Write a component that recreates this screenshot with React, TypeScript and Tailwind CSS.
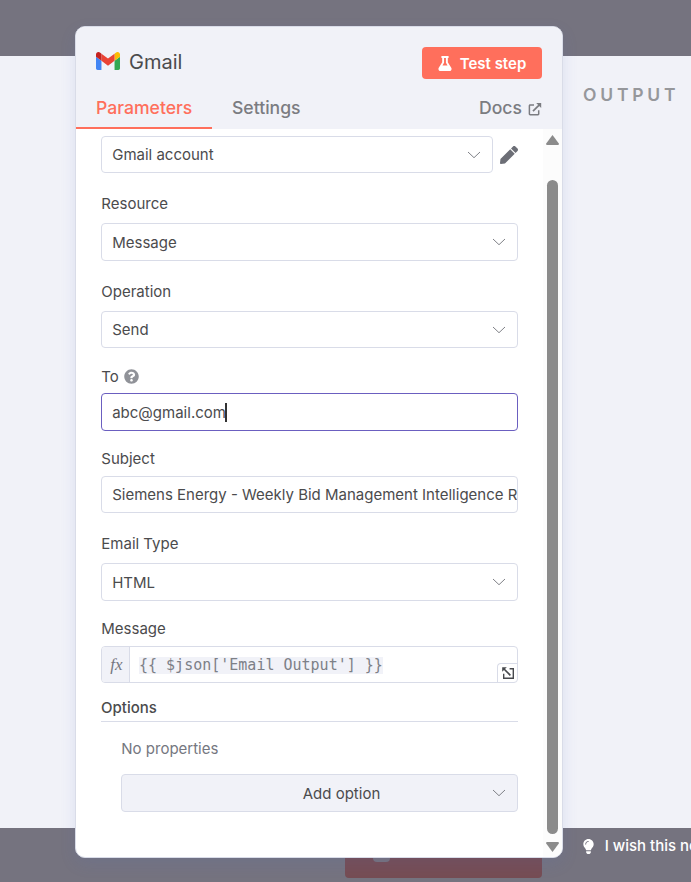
import type { ReactNode } from 'react';
import { FaFlask, FaLightbulb, FaPen, FaQuestionCircle } from 'react-icons/fa';

function GmailLogo() {
  return (
    <svg className="h-[18px] w-6" viewBox="52 42 88 66">
      <path fill="#4285f4" d="M58 108h14V74L52 59v43c0 3.32 2.69 6 6 6" />
      <path fill="#34a853" d="M120 108h14c3.32 0 6-2.69 6-6V59l-20 15" />
      <path fill="#fbbc04" d="M120 48v26l20-15v-8c0-7.42-8.47-11.65-14.4-7.2" />
      <path fill="#ea4335" d="M72 74V48l24 18 24-18v26L96 92" />
      <path fill="#c5221f" d="M52 51v8l20 15V48l-5.6-4.2c-5.94-4.45-14.4-.22-14.4 7.2" />
    </svg>
  );
}

function ExternalLink() {
  return (
    <svg className="h-[14px] w-[14px]" viewBox="0 0 14 14" fill="none" stroke="currentColor" strokeWidth="1.5">
      <path d="M6 3H2.1Q1.4 3 1.4 3.7V12Q1.4 12.7 2.1 12.7H10Q10.7 12.7 10.7 12V8.2" />
      <path d="M5 9.2L11.6 2.6" strokeWidth="1.7" />
      <path d="M8.2 1H13.2V6L11.7 4.5 9.7 2.5z" fill="currentColor" stroke="none" />
    </svg>
  );
}

function Chevron() {
  return (
    <svg className="h-2 w-[14px] shrink-0 text-[#7f8187]" viewBox="0 0 14 8" fill="none" stroke="currentColor" strokeWidth="1">
      <path d="M1 1l6 5.7L13 1" />
    </svg>
  );
}

function Label({ children, className = '' }: { children: ReactNode; className?: string }) {
  return <div className={`flex h-5 items-center pl-[0.3px] ${className}`}>{children}</div>;
}

function Select({ value, className = '' }: { value: string; className?: string }) {
  return (
    <div className={`flex items-center justify-between rounded border border-[#d9dce8] bg-white pr-[11px] pl-[10.2px] ${className}`}>
      <span className="pt-[2px]">{value}</span>
      <Chevron />
    </div>
  );
}

export default function App() {
  return (
    <div className="relative flex h-[882px] w-[691px] flex-col overflow-hidden bg-[#75737f] font-['Inter',sans-serif] text-[15px] text-[#4b4b4d]">
      <div className="h-14 shrink-0" />
      <div className="flex h-[772px] shrink-0 justify-end bg-[#f1f2f8]">
        <h2 className="w-[108px] pt-[27px] text-[17.5px] leading-6 font-semibold tracking-[3.8px] text-[#96979b]">OUTPUT</h2>
      </div>
      <div className="relative flex h-[54px] justify-between">
        <div className="ml-[345px] flex h-[50px] w-[197px] items-end rounded bg-[#764d54] pb-4 pl-[28px]">
          <div className="h-6 w-[17px] rounded-sm bg-[#77717c]" />
        </div>
        <div className="flex h-9 w-[108px] items-center gap-[10.7px] whitespace-nowrap font-medium text-white">
          <FaLightbulb className="h-[15px] w-[11px] shrink-0" />
          <span>I wish this node would</span>
        </div>
      </div>

      <section className="absolute top-[26px] left-[75px] flex h-[832px] w-[488px] flex-col overflow-hidden rounded-[10px] border border-[#d9dce8] bg-white shadow-[0_6px_16px_rgba(80,110,190,0.13)]">
        <header className="h-[102px] shrink-0 bg-[#f1f2f8]">
          <div className="flex h-[72px] items-center justify-between pr-5 pl-[19.5px]">
            <div className="flex items-center gap-[9.5px] pb-[2px] text-[20px]">
              <span className="pb-[2px]"><GmailLogo /></span>
              <h1>Gmail</h1>
            </div>
            <button className="flex h-8 w-[120px] items-center justify-center gap-2 rounded bg-[#ff6f5c] text-[15px] font-semibold text-white">
              <FaFlask className="h-[15px] w-[14px]" />
              <span className="pt-[2px]">Test step</span>
            </button>
          </div>
          <nav className="flex h-[30px] text-[17.6px] leading-[18px] font-medium text-[#7b7c81]">
            <div className="w-[136px] border-b-2 border-[#ff6f5c] pl-5 text-[#ff6f5c]">Parameters</div>
            <div className="pl-5">Settings</div>
            <div className="ml-auto flex items-start gap-[6px] pr-5">
              Docs
              <span className="pt-[3px]"><ExternalLink /></span>
            </div>
          </nav>
        </header>

        <div className="flex min-h-0 grow">
          <main className="w-[442px] pt-[7px] pl-[25px]">
            <div className="flex items-center">
              <Select value="Gmail account" className="h-[37px] w-[392px]" />
              <FaPen className="ml-[7px] h-[18px] w-[18px] text-[#6c6e76]" />
            </div>

            <Label className="mt-[21px]">Resource</Label>
            <Select value="Message" className="mt-[9px] h-[38px]" />

            <Label className="mt-[21px]">Operation</Label>
            <Select value="Send" className="mt-[9px] h-[37px]" />

            <Label className="mt-[19px] gap-[5px]">
              To
              <FaQuestionCircle className="mb-px h-[15px] w-[15px] text-[#909298]" />
            </Label>
            <div className="mt-[6px] flex h-[38px] items-center rounded border border-[#6b5fc0] pl-[10.2px]">
              <span className="pt-[2px]">abc@gmail.com</span>
              <span className="-ml-px h-[19px] w-[2px] bg-[#333]" />
            </div>

            <Label className="mt-[18px]">Subject</Label>
            <div className="mt-[7px] flex h-[37px] items-center overflow-hidden rounded border border-[#d9dce8] pt-[2px] pl-[10.2px] whitespace-nowrap">
              Siemens Energy - Weekly Bid Management Intelligence Report
            </div>

            <Label className="mt-[21px]">Email Type</Label>
            <Select value="HTML" className="mt-[9px] h-[38px]" />

            <Label className="mt-[18px]">Message</Label>
            <div className="mt-[7px] flex h-[37px] overflow-hidden rounded border border-[#d9dce8]">
              <div className="flex w-7 items-center justify-center border-r border-[#d9dce8] bg-[#f1f2f8] pl-[2px] font-['Liberation_Serif',serif] text-[17px] text-[#757780] italic">fx</div>
              <div className="flex grow items-center pt-[2px] pl-[9px] font-['DejaVu_Sans_Mono',monospace] text-[15px] whitespace-pre text-[#7d8087]">
                <span className="bg-[#f1f2f8] leading-[17px]">{"{{ $json['Email Output'] }}"}</span>
              </div>
              <div className="flex h-[19px] w-5 items-center justify-center self-end rounded-tl border-t border-l border-[#d9dce8]">
                <svg className="h-3 w-3 text-[#47494d]" viewBox="0 0 12 12" fill="none" stroke="currentColor" strokeWidth="1.4">
                  <path d="M7.6 1.7h3.7v9.6H1.7V6.8" />
                  <path d="M2 2l6.4 6.4" strokeWidth="1.6" />
                  <path d="M.2.2h4.6L.2 4.8z" fill="currentColor" stroke="none" />
                </svg>
              </div>
            </div>

            <div className="mt-[14px] flex h-[25px] items-center border-b border-[#d9dce8] pb-[2px] font-medium">Options</div>
            <div className="pl-5">
              <p className="mt-[17px] h-5 pl-[0.3px] leading-5 text-[#757780]">No properties</p>
              <div className="mt-[15px] flex h-[38px] items-center justify-end rounded border border-[#d9dce8] bg-[#f1f2f8] pr-[11px]">
                <span className="grow pt-[2px] pl-[68px] text-center">Add option</span>
                <span className="flex w-[13px] justify-end"><Chevron /></span>
              </div>
            </div>
          </main>

          <div className="ml-auto flex w-[19px] flex-col items-center bg-[#fcfcfc] pt-[6px]">
            <svg className="h-[10px] w-[13px] text-[#8b8b8b]" viewBox="0 0 13 10">
              <path fill="currentColor" d="M6.5 0L13 8.8Q13 10 11.8 10H1.2Q0 10 0 8.8Z" />
            </svg>
            <div className="mt-[35px] h-[654px] w-[11px] rounded-full bg-[#8b8b8b]" />
            <svg className="mt-2 h-[10px] w-[13px] text-[#8b8b8b]" viewBox="0 0 13 10">
              <path fill="currentColor" d="M6.5 10L13 1.2Q13 0 11.8 0H1.2Q0 0 0 1.2Z" />
            </svg>
          </div>
        </div>
      </section>
    </div>
  );
}
